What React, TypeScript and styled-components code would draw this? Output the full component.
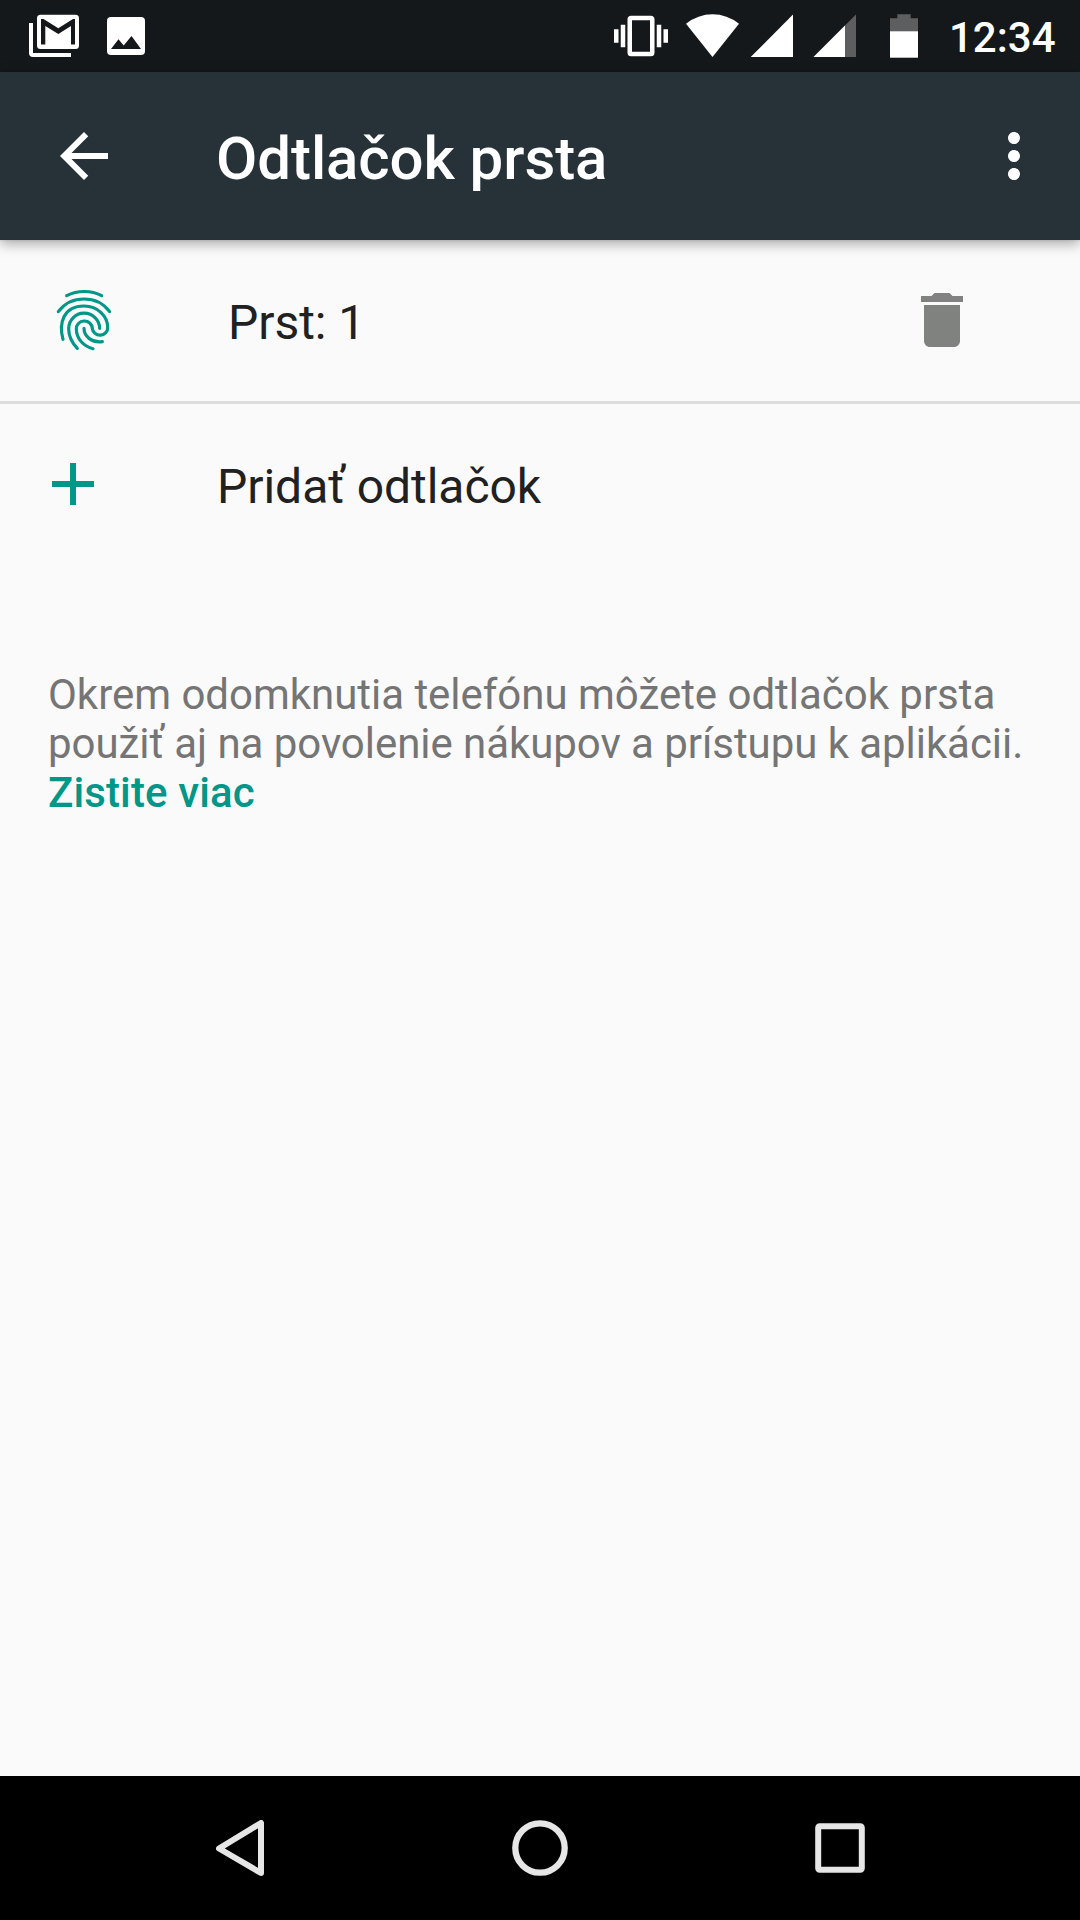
import React from "react";
import styled, { createGlobalStyle } from "styled-components";

const GlobalStyle = createGlobalStyle`
  * { box-sizing: border-box; }
  body { margin: 0; background: #fafafa; font-family: Roboto, "Noto Sans", sans-serif; }
  svg { display: block; flex: none; }
  p { margin: 0; }
`;

const Screen = styled.div`
  width: 1080px;
  height: 1920px;
  display: flex;
  flex-direction: column;
  background: #fafafa;
  overflow: hidden;
`;

const StatusBar = styled.header`
  height: 72px;
  flex: none;
  display: flex;
  justify-content: space-between;
  padding: 0 25px 0 29px;
  background: #14181b;
  color: #fff;
`;

const StatusGroup = styled.div<{ $gap: number }>`
  display: flex;
  align-items: center;
  gap: ${(p) => p.$gap}px;
`;

const Clock = styled.span`
  width: 106px;
  margin-left: 13px;
  padding-top: 4px;
  font-size: 42px;
  font-weight: 500;
  line-height: 50px;
  white-space: nowrap;
`;

const Toolbar = styled.div`
  height: 168px;
  flex: none;
  display: flex;
  align-items: center;
  padding: 0 30px 0 48px;
  background: #263238;
  color: #fff;
  z-index: 1;
  box-shadow: 0 4px 12px rgba(0, 0, 0, 0.32), 0 0 3px rgba(0, 0, 0, 0.12);
`;

const Title = styled.h1`
  flex: 1;
  margin: 0;
  padding: 5px 0 0 96px;
  font-size: 60px;
  font-weight: 500;
  line-height: 70px;
  letter-spacing: -0.08px;
`;

const IconButton = styled.button`
  display: flex;
  padding: 0;
  border: 0;
  background: none;
  color: inherit;
`;

const Content = styled.main`
  flex: 1;
`;

const Row = styled.div<{ $height: number; $left: number; $divider?: boolean }>`
  height: ${(p) => p.$height}px;
  display: flex;
  align-items: center;
  padding: 0 102px 1px ${(p) => p.$left}px;
  color: #009688;
  border-bottom: ${(p) => (p.$divider ? "3px solid #dcdcdc" : "0")};
`;

const RowLabel = styled.span<{ $gap: number }>`
  flex: 1;
  padding: 5px 0 0 ${(p) => p.$gap}px;
  font-size: 48px;
  line-height: 56px;
  letter-spacing: -0.04px;
  color: #212121;
`;

const DeleteButton = styled(IconButton)`
  color: #808280;
`;

const Footer = styled.p`
  padding: 105px 40px 0 48px;
  font-size: 42px;
  line-height: 49px;
  letter-spacing: -0.055px;
  color: #757575;
  white-space: nowrap;
`;

const FirstLine = styled.span`
  letter-spacing: -0.025px;
`;

const Link = styled.a`
  color: #009688;
  font-weight: 500;
  letter-spacing: 0.12px;
`;

const NavBar = styled.nav`
  height: 144px;
  flex: none;
  display: flex;
  align-items: center;
  justify-content: space-between;
  padding: 0 215px 0 216px;
  background: #000;
  color: #e6e6e6;
`;

const MaterialIcon = ({ d, size = 72 }: { d: string; size?: number }) => (
  <svg width={size} height={size} viewBox="0 0 24 24" fill="currentColor">
    <path d={d} />
  </svg>
);

const GmailIcon = () => (
  <svg width="50" height="72" viewBox="29 0 50 72" fill="none">
    <path d="M31 23V53q0 2 2 2H71" stroke="#fff" strokeWidth="4" />
    <rect x="37" y="14.7" width="42" height="34.3" rx="3.5" fill="#fff" />
    <path d="M41 44.5V19H43.5L58.3 28.2L73 19H75V44.5H71V26L58.3 34L45.3 26V44.5Z" fill="#14181b" />
  </svg>
);

const PictureIcon = () => (
  <svg width="38" height="72" viewBox="107 0 38 72">
    <rect x="107" y="17" width="38" height="38" rx="4" fill="#fff" />
    <path d="M111 49L118.5 39.3L123.7 45.6L131.5 36L141 49Z" fill="#14181b" />
  </svg>
);

const SignalIcons = () => (
  <svg width="232" height="72" viewBox="686 0 232 72" fill="#fff">
    <path d="M712.5 57L686 23.7Q698 14.2 712.5 14.2T739 23.7Z" />
    <path d="M750.7 57H793V14.5Z" />
    <path d="M813.5 57H856V14.5Z" fill="#5d5e60" />
    <path d="M813.5 57H845V25.5Z" />
    <path d="M890 32V18.3H897.3V14.3H910.7V18.3H918V32Z" fill="#5d5e60" />
    <path d="M890 31.3H918V57.7H890Z" />
  </svg>
);

const FingerprintIcon = () => (
  <svg width="72" height="72" viewBox="54 42 216 216" fill="none" stroke="#009688" strokeWidth="9.5" strokeLinecap="round">
    <path d="M110 77Q134 64.5 163 64.5T215 77" />
    <path d="M85 125C103 101 131 87 162 87S221 101 239 125" />
    <path d="M99 208C86 161 99 108 162 108C204 108 233 139 233 172A23 22 0 0 1 187 175A24 23 0 0 0 139 177C139 207 162 229 189 236" />
    <path d="M142 235C124 216 116 196 116 176A46.500 46 0 0 1 209 175" />
    <path d="M162 175C162 200 186 219 217 215" />
  </svg>
);

const BackIcon = () => (
  <svg width="48" height="56" viewBox="0 0 48 56" fill="none" stroke="currentColor" strokeWidth="6" strokeLinejoin="round">
    <path d="M45 3V53L3 28.5Z" />
  </svg>
);

const HomeIcon = () => (
  <svg width="56" height="56" viewBox="0 0 56 56" fill="none" stroke="currentColor" strokeWidth="6.3">
    <circle cx="28" cy="28" r="24.7" />
  </svg>
);

const RecentsIcon = () => (
  <svg width="50" height="50" viewBox="0 0 50 50" fill="none" stroke="currentColor" strokeWidth="6">
    <rect x="3.2" y="3.2" width="43.6" height="43.6" rx="1.5" />
  </svg>
);

const VIBRATE =
  "M0 15h2V9H0v6zm3 2h2V7H3v10zm19-8v6h2V9h-2zm-3 8h2V7h-2v10zM16.5 3h-9C6.67 3 6 3.67 6 4.5v15c0 .83.67 1.5 1.5 1.5h9c.83 0 1.5-.67 1.5-1.5v-15c0-.83-.67-1.5-1.5-1.5zM16 19H8V5h8v14z";
const ARROW = "M20 11H7.83l5.59-5.59L12 4l-8 8 8 8 1.41-1.41L7.83 13H20v-2z";
const MORE =
  "M12 8c1.1 0 2-.9 2-2s-.9-2-2-2-2 .9-2 2 .9 2 2 2zm0 2c-1.1 0-2 .9-2 2s.9 2 2 2 2-.9 2-2-.9-2-2-2zm0 6c-1.1 0-2 .9-2 2s.9 2 2 2 2-.9 2-2-.9-2-2-2z";
const TRASH = "M6 19c0 1.1.9 2 2 2h8c1.1 0 2-.9 2-2V7H6v12zM19 4h-3.5l-1-1h-5l-1 1H5v2h14V4z";
const PLUS = "M19 13h-6v6h-2v-6H5v-2h6V5h2v6h6v2z";

export default function App() {
  return (
    <Screen>
      <GlobalStyle />
      <StatusBar>
        <StatusGroup $gap={28}>
          <GmailIcon />
          <PictureIcon />
        </StatusGroup>
        <StatusGroup $gap={18}>
          <MaterialIcon d={VIBRATE} size={54} />
          <SignalIcons />
          <Clock>12:34</Clock>
        </StatusGroup>
      </StatusBar>
      <Toolbar>
        <IconButton aria-label="Späť"><MaterialIcon d={ARROW} /></IconButton>
        <Title>Odtlačok prsta</Title>
        <IconButton aria-label="Viac"><MaterialIcon d={MORE} /></IconButton>
      </Toolbar>
      <Content>
        <Row $height={164} $left={48} $divider>
          <FingerprintIcon />
          <RowLabel $gap={108}>Prst: 1</RowLabel>
          <DeleteButton aria-label="Odstrániť"><MaterialIcon d={TRASH} /></DeleteButton>
        </Row>
        <Row $height={161} $left={37}>
          <MaterialIcon d={PLUS} />
          <RowLabel $gap={108}>Pridať odtlačok</RowLabel>
        </Row>
        <Footer>
          <FirstLine>Okrem odomknutia telefónu môžete odtlačok prsta</FirstLine>
          <br />
          použiť aj na povolenie nákupov a prístupu k aplikácii.
          <br />
          <Link>Zistite viac</Link>
        </Footer>
      </Content>
      <NavBar>
        <IconButton aria-label="Naspäť"><BackIcon /></IconButton>
        <IconButton aria-label="Domov"><HomeIcon /></IconButton>
        <IconButton aria-label="Prehľad"><RecentsIcon /></IconButton>
      </NavBar>
    </Screen>
  );
}
